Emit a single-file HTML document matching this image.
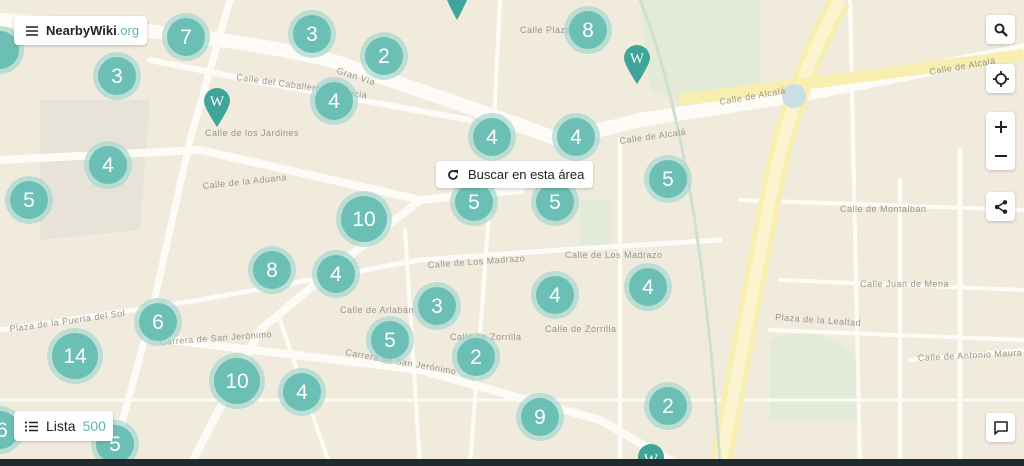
<!DOCTYPE html>
<html><head><meta charset="utf-8">
<style>
html,body{margin:0;padding:0;width:1024px;height:466px;overflow:hidden;font-family:"Liberation Sans",sans-serif}
#m{position:absolute;left:0;top:0}
.box{position:absolute;background:#fff;border-radius:4px;box-shadow:0 1px 3px rgba(0,0,0,.2);display:flex;align-items:center;color:#222}
.btn{position:absolute;left:986px;width:29px;height:29px;background:#fff;border-radius:4px;box-shadow:0 1px 3px rgba(0,0,0,.2);display:flex;align-items:center;justify-content:center}
</style></head><body>
<svg id="m" width="1024" height="466" viewBox="0 0 1024 466" font-family="Liberation Sans, sans-serif">
<rect width="1024" height="466" fill="#f1ebde"/>
<path d="M640 0 L760 0 L760 100 L700 110 L650 90 Z" fill="#e3ead8"/>
<path d="M770 340 Q820 320 860 360 L860 420 L770 420 Z" fill="#e2ead8"/>
<path d="M580 200 L612 200 L612 245 L580 245 Z" fill="#e3ead8"/>
<path d="M40 100 L150 100 L140 230 L40 240 Z" fill="#e8e3d8"/>
<g stroke="#fdfbf6" fill="none" stroke-linecap="round">
<path d="M0 20 Q200 30 330 60 Q480 110 560 140 L640 120 L800 95 L1024 50" stroke-width="14"/>
<path d="M0 160 L200 150 L420 200 L520 190" stroke-width="8"/>
<path d="M150 60 L250 80 L470 120" stroke-width="6"/>
<path d="M230 0 L190 140 L150 320 L110 466" stroke-width="7"/>
<path d="M420 200 L320 280 L260 330 L190 466" stroke-width="8"/>
<path d="M0 330 L200 300 L420 260 L560 250 L720 240" stroke-width="5"/>
<path d="M170 340 L420 370 L600 420 L680 466" stroke-width="8"/>
<path d="M500 0 L490 200 L470 466" stroke-width="4"/>
<path d="M620 140 L620 466" stroke-width="4"/>
<path d="M405 230 L420 466" stroke-width="4"/>
<path d="M280 320 L330 466" stroke-width="4"/>
<path d="M740 200 L1024 210" stroke-width="4"/>
<path d="M780 280 L1024 290" stroke-width="4"/>
<path d="M770 330 L1024 340" stroke-width="4"/>
<path d="M910 360 L1024 350" stroke-width="4"/>
<path d="M960 150 L960 466" stroke-width="5"/>
<path d="M900 180 L900 466" stroke-width="4"/>
<path d="M850 0 L860 466" stroke-width="4"/>
<path d="M0 400 L1024 400" stroke-width="3"/>
</g>
<path d="M840 0 Q790 90 770 200 L720 466" stroke="#f8eeb0" stroke-width="22" fill="none"/>
<path d="M840 0 Q790 90 770 200 L720 466" stroke="#fbf5cf" stroke-width="12" fill="none"/>
<path d="M680 100 L1024 55" stroke="#f8eeb0" stroke-width="12" fill="none"/>
<circle cx="794" cy="96" r="12" fill="#c9dfe6"/>
<path d="M640 0 Q700 150 720 466" stroke="#cfe0d0" stroke-width="3" fill="none"/>
<g fill="#9a958c" font-size="9" letter-spacing="0.5">
<text x="205" y="136">Calle de los Jardines</text>
<text x="203" y="189" transform="rotate(-6 203 189)">Calle de la Aduana</text>
<text x="236" y="80" transform="rotate(8 236 80)">Calle del Caballero de Gracia</text>
<text x="336" y="73" transform="rotate(18 336 73)">Gran Vía</text>
<text x="520" y="33">Calle Plaza</text>
<text x="720" y="105" transform="rotate(-10 720 105)">Calle de Alcalá</text>
<text x="930" y="75" transform="rotate(-10 930 75)">Calle de Alcalá</text>
<text x="620" y="144" transform="rotate(-8 620 144)">Calle de Alcalá</text>
<text x="428" y="268" transform="rotate(-4 428 268)">Calle de Los Madrazo</text>
<text x="565" y="258">Calle de Los Madrazo</text>
<text x="840" y="212">Calle de Montalbán</text>
<text x="860" y="287">Calle Juan de Mena</text>
<text x="775" y="320" transform="rotate(4 775 320)">Plaza de la Lealtad</text>
<text x="918" y="361" transform="rotate(-3 918 361)">Calle de Antonio Maura</text>
<text x="10" y="332" transform="rotate(-8 10 332)">Plaza de la Puerta del Sol</text>
<text x="160" y="345" transform="rotate(-4 160 345)">Carrera de San Jerónimo</text>
<text x="345" y="355" transform="rotate(10 345 355)">Carrera de San Jerónimo</text>
<text x="450" y="340">Calle de Zorrilla</text>
<text x="545" y="332">Calle de Zorrilla</text>
<text x="340" y="313">Calle de Arlabán</text>
</g>
<g text-anchor="middle" fill="#fff" font-size="21">
<g fill="#a6d8d0" opacity="0.7">
<circle cx="186" cy="37" r="24"/><circle cx="312" cy="34" r="24"/><circle cx="384" cy="56" r="24"/><circle cx="588" cy="30" r="24"/><circle cx="117" cy="76" r="24"/><circle cx="334" cy="101" r="24"/><circle cx="492" cy="137" r="24"/><circle cx="576" cy="137" r="24"/><circle cx="108" cy="165" r="24"/><circle cx="29" cy="200" r="24"/><circle cx="668" cy="179" r="24"/><circle cx="364" cy="219" r="28"/><circle cx="474" cy="202" r="24"/><circle cx="555" cy="202" r="24"/><circle cx="272" cy="270" r="24"/><circle cx="336" cy="274" r="24"/><circle cx="437" cy="306" r="24"/><circle cx="555" cy="295" r="24"/><circle cx="648" cy="287" r="24"/><circle cx="158" cy="322" r="24"/><circle cx="390" cy="340" r="24"/><circle cx="75" cy="356" r="28"/><circle cx="476" cy="357" r="24"/><circle cx="237" cy="381" r="28"/><circle cx="302" cy="392" r="24"/><circle cx="540" cy="417" r="24"/><circle cx="668" cy="406" r="24"/><circle cx="115" cy="444" r="24"/><circle cx="0" cy="430" r="24"/><circle cx="0" cy="50" r="24"/>
</g>
<g fill="#6cbfb4">
<circle cx="186" cy="37" r="19"/><circle cx="312" cy="34" r="19"/><circle cx="384" cy="56" r="19"/><circle cx="588" cy="30" r="19"/><circle cx="117" cy="76" r="19"/><circle cx="334" cy="101" r="19"/><circle cx="492" cy="137" r="19"/><circle cx="576" cy="137" r="19"/><circle cx="108" cy="165" r="19"/><circle cx="29" cy="200" r="19"/><circle cx="668" cy="179" r="19"/><circle cx="364" cy="219" r="23"/><circle cx="474" cy="202" r="19"/><circle cx="555" cy="202" r="19"/><circle cx="272" cy="270" r="19"/><circle cx="336" cy="274" r="19"/><circle cx="437" cy="306" r="19"/><circle cx="555" cy="295" r="19"/><circle cx="648" cy="287" r="19"/><circle cx="158" cy="322" r="19"/><circle cx="390" cy="340" r="19"/><circle cx="75" cy="356" r="23"/><circle cx="476" cy="357" r="19"/><circle cx="237" cy="381" r="23"/><circle cx="302" cy="392" r="19"/><circle cx="540" cy="417" r="19"/><circle cx="668" cy="406" r="19"/><circle cx="115" cy="444" r="19"/><circle cx="0" cy="430" r="19"/><circle cx="0" cy="50" r="19"/>
</g>
<text x="186" y="44">7</text><text x="312" y="41">3</text><text x="384" y="63">2</text><text x="588" y="37">8</text><text x="117" y="83">3</text><text x="334" y="108">4</text><text x="492" y="144">4</text><text x="576" y="144">4</text><text x="108" y="172">4</text><text x="29" y="207">5</text><text x="668" y="186">5</text><text x="364" y="226">10</text><text x="474" y="209">5</text><text x="555" y="209">5</text><text x="272" y="277">8</text><text x="336" y="281">4</text><text x="437" y="313">3</text><text x="555" y="302">4</text><text x="648" y="294">4</text><text x="158" y="329">6</text><text x="390" y="347">5</text><text x="75" y="363">14</text><text x="476" y="364">2</text><text x="237" y="388">10</text><text x="302" y="399">4</text><text x="540" y="424">9</text><text x="668" y="413">2</text><text x="115" y="451">5</text><text x="2" y="437">6</text>
</g>
<g fill="#3fa59a">
<path d="M217 88 a13 13 0 0 1 13 13 q0 6 -13 26 q-13 -20 -13 -26 a13 13 0 0 1 13 -13z"/>
<path d="M637 45 a13 13 0 0 1 13 13 q0 6 -13 26 q-13 -20 -13 -26 a13 13 0 0 1 13 -13z"/>
<path d="M444 -10 L470 -10 q0 6 -13 30 q-13 -24 -13 -30z"/>
<path d="M651 444 a13 13 0 0 1 13 13 l0 9 l-26 0 l0 -9 a13 13 0 0 1 13 -13z"/>
</g>
<g fill="#fff" font-family="Liberation Serif, serif" font-size="15" text-anchor="middle">
<text x="217" y="106">W</text><text x="637" y="63">W</text><text x="651" y="464">W</text>
</g>
<rect x="0" y="459" width="1024" height="7" fill="#1f2a2e"/>
</svg>

<div class="box" style="left:14px;top:16px;width:133px;height:29px;font-size:13px;font-weight:bold">
<svg style="margin-left:12px;margin-right:8px" width="12" height="10"><path d="M0 1h12M0 5h12M0 9h12" stroke="#222" stroke-width="1.6"/></svg>NearbyWiki<span style="font-weight:normal;color:#5fb5aa">.org</span></div>

<div class="box" style="left:436px;top:161px;width:157px;height:27px;font-size:13px">
<svg style="margin-left:11px;margin-right:9px" width="12" height="12" viewBox="0 0 12 12"><path d="M10 6.5A4 4 0 1 1 8.8 3" stroke="#222" stroke-width="1.8" fill="none"/><path d="M7 1h4v4z" fill="#222"/></svg>Buscar en esta área</div>

<div class="box" style="left:14px;top:411px;width:99px;height:30px;font-size:14px">
<svg style="margin-left:11px;margin-right:8px" width="13" height="11"><path d="M4 1.5h9M4 5.5h9M4 9.5h9" stroke="#222" stroke-width="1.5"/><path d="M0 1.5h2M0 5.5h2M0 9.5h2" stroke="#222" stroke-width="1.8"/></svg>Lista<span style="color:#5fb5aa;margin-left:7px">500</span></div>

<div class="btn" style="top:15px"><svg width="14" height="14"><circle cx="5.5" cy="5.5" r="4" stroke="#222" stroke-width="2" fill="none"/><path d="M8.5 8.5l4.5 4.5" stroke="#222" stroke-width="2.4"/></svg></div>
<div class="btn" style="top:64px"><svg width="16" height="16"><circle cx="8" cy="8" r="5" stroke="#222" stroke-width="1.8" fill="none"/><path d="M8 0v3M8 13v3M0 8h3M13 8h3" stroke="#222" stroke-width="1.8"/></svg></div>
<div class="btn" style="top:112px;height:58px;flex-direction:column"><svg width="14" height="14" style="margin-bottom:15px"><path d="M7 1v12M1 7h12" stroke="#222" stroke-width="2"/></svg><svg width="14" height="14"><path d="M1 7h12" stroke="#222" stroke-width="2"/></svg></div>
<div class="btn" style="top:192px"><svg width="14" height="14"><path d="M11 2L3 7l8 5" stroke="#222" stroke-width="1.6" fill="none"/><circle cx="11" cy="2.3" r="2.2" fill="#222"/><circle cx="3" cy="7" r="2.2" fill="#222"/><circle cx="11" cy="11.7" r="2.2" fill="#222"/></svg></div>
<div class="btn" style="top:413px"><svg width="14" height="14"><path d="M1 1h12v9H4l-3 3z" stroke="#222" stroke-width="1.6" fill="none" stroke-linejoin="round"/></svg></div>
</body></html>
